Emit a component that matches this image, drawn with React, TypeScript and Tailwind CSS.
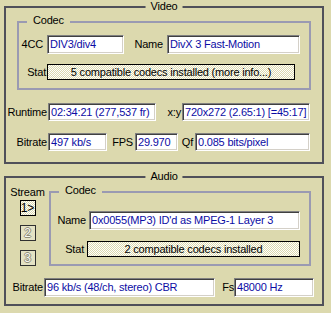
import React from 'react';

// sunken edit box, Win9x style
const Edit = ({ w, h, children }: { w: string; h?: string; children: React.ReactNode }) => (
  <div
    className={`${w} ${h ?? 'h-full'} flex items-center bg-white border border-t-[#808080] border-l-[#808080] border-b-white border-r-white shadow-[inset_1px_1px_0_#404040,inset_-1px_-1px_0_#d4d0c8] pl-[2px] text-[#0c0ca4] whitespace-nowrap overflow-hidden`}
  >
    {children}
  </div>
);

const Dither = ({ w, children }: { w: string; children: React.ReactNode }) => (
  <div
    className={`${w} h-full flex items-center justify-center border border-black bg-[repeating-conic-gradient(#ffffff_0%_25%,#dcd9ae_0%_50%)] bg-[length:2px_2px] whitespace-nowrap overflow-hidden`}
  >
    {children}
  </div>
);

const Label = ({ w, children }: { w: string; children: React.ReactNode }) => (
  <span className={`${w} shrink-0 text-right whitespace-nowrap`}>{children}</span>
);

const StreamBtn = ({ label, active }: { label: string; active?: boolean }) => (
  <div
    className={`w-[16px] h-[16px] flex items-center justify-center border text-[12px] ${
      active
        ? 'border-black text-black bg-[repeating-conic-gradient(#ffffff_0%_25%,#dcd9ae_0%_50%)] bg-[length:2px_2px]'
        : 'border-[#303030] bg-[#e4e2c4] text-[#f8f8f0] [text-shadow:1px_0_0_#8e8c7a,-1px_0_0_#8e8c7a,0_1px_0_#8e8c7a,0_-1px_0_#8e8c7a]'
    }`}
  >
    {label}
  </div>
);

export default function App() {
  return (
    <div className="w-[331px] h-[313px] overflow-hidden bg-[#dcd9ae] pt-[6px] pl-[4px] text-black text-[11px] leading-[13px] tracking-[-0.2px] font-['Liberation_Sans',Arial,sans-serif]">
      {/* Video */}
      <div className="relative w-[320px] h-[158px] border-2 border-[#50505a]">
        <span className="absolute left-1/2 top-[-8px] -translate-x-1/2 bg-[#dcd9ae] px-[5px]">Video</span>

        <div className="relative ml-[11px] mt-[13px] w-[294px] h-[69px] border-2 border-[#9a9ab2]">
          <span className="absolute left-[8px] top-[-9px] bg-[#dcd9ae] px-[6px]">Codec</span>

          <div className="mt-[12px] h-[19px] flex items-center">
            <Label w="w-[24px]">4CC</Label>
            <div className="ml-[4px] h-full">
              <Edit w="w-[77px]">DIV3/div4</Edit>
            </div>
            <Label w="w-[39px]">Name</Label>
            <div className="ml-[4px] h-full">
              <Edit w="w-[133px]">DivX 3 Fast-Motion</Edit>
            </div>
          </div>

          <div className="mt-[10px] h-[16px] flex items-center">
            <Label w="w-[27px]">Stat</Label>
            <div className="ml-[1px] h-full">
              <Dither w="w-[248px]">5 compatible codecs installed (more info...)</Dither>
            </div>
          </div>
        </div>

        <div className="mt-[13px] h-[18px] flex items-center">
          <Label w="w-[41px]">Runtime</Label>
          <div className="ml-[1px] h-full">
            <Edit w="w-[108px]">02:34:21 (277,537 fr)</Edit>
          </div>
          <Label w="w-[25px]">x:y</Label>
          <div className="ml-[1px] h-full">
            <Edit w="w-[128px]">720x272 (2.65:1) [=45:17]</Edit>
          </div>
        </div>

        <div className="mt-[12px] h-[18px] flex items-center">
          <Label w="w-[41px]">Bitrate</Label>
          <div className="ml-[1px] h-full">
            <Edit w="w-[59px]">497 kb/s</Edit>
          </div>
          <Label w="w-[26px]">FPS</Label>
          <div className="ml-[2px] h-full">
            <Edit w="w-[43px]">29.970</Edit>
          </div>
          <Label w="w-[15px]">Qf</Label>
          <div className="ml-[2px] h-full">
            <Edit w="w-[115px]">0.085 bits/pixel</Edit>
          </div>
        </div>
      </div>

      {/* Audio */}
      <div className="relative mt-[12px] w-[320px] h-[130px] border-2 border-[#50505a]">
        <span className="absolute left-1/2 top-[-8px] -translate-x-1/2 bg-[#dcd9ae] px-[5px]">Audio</span>

        <div className="flex">
          <div className="w-[43px] flex flex-col items-center pt-[8px]">
            <span>Stream</span>
            <div className="mt-[1px] flex flex-col gap-[9px]">
              <StreamBtn label="1>" active />
              <StreamBtn label="2" />
              <StreamBtn label="3" />
            </div>
          </div>

          <div className="relative mt-[13px] w-[262px] h-[75px] border-2 border-[#9a9ab2]">
            <span className="absolute left-[8px] top-[-9px] bg-[#dcd9ae] px-[6px]">Codec</span>

            <div className="mt-[18px] h-[19px] flex items-center">
              <Label w="w-[35px]">Name</Label>
              <div className="ml-[3px] h-full">
                <Edit w="w-[211px]">0x0055(MP3) ID'd as MPEG-1 Layer 3</Edit>
              </div>
            </div>

            <div className="mt-[11px] h-[16px] flex items-center">
              <Label w="w-[33px]">Stat</Label>
              <div className="ml-[3px] h-full">
                <Dither w="w-[213px]">2 compatible codecs installed</Dither>
              </div>
            </div>
          </div>
        </div>

        <div className="mt-[12px] h-[19px] flex items-center">
          <Label w="w-[37px]">Bitrate</Label>
          <div className="ml-[1px] h-full">
            <Edit w="w-[171px]">96 kb/s (48/ch, stereo) CBR</Edit>
          </div>
          <Label w="w-[19px]">Fs</Label>
          <div className="h-full">
            <Edit w="w-[80px]">48000 Hz</Edit>
          </div>
        </div>
      </div>
    </div>
  );
}
